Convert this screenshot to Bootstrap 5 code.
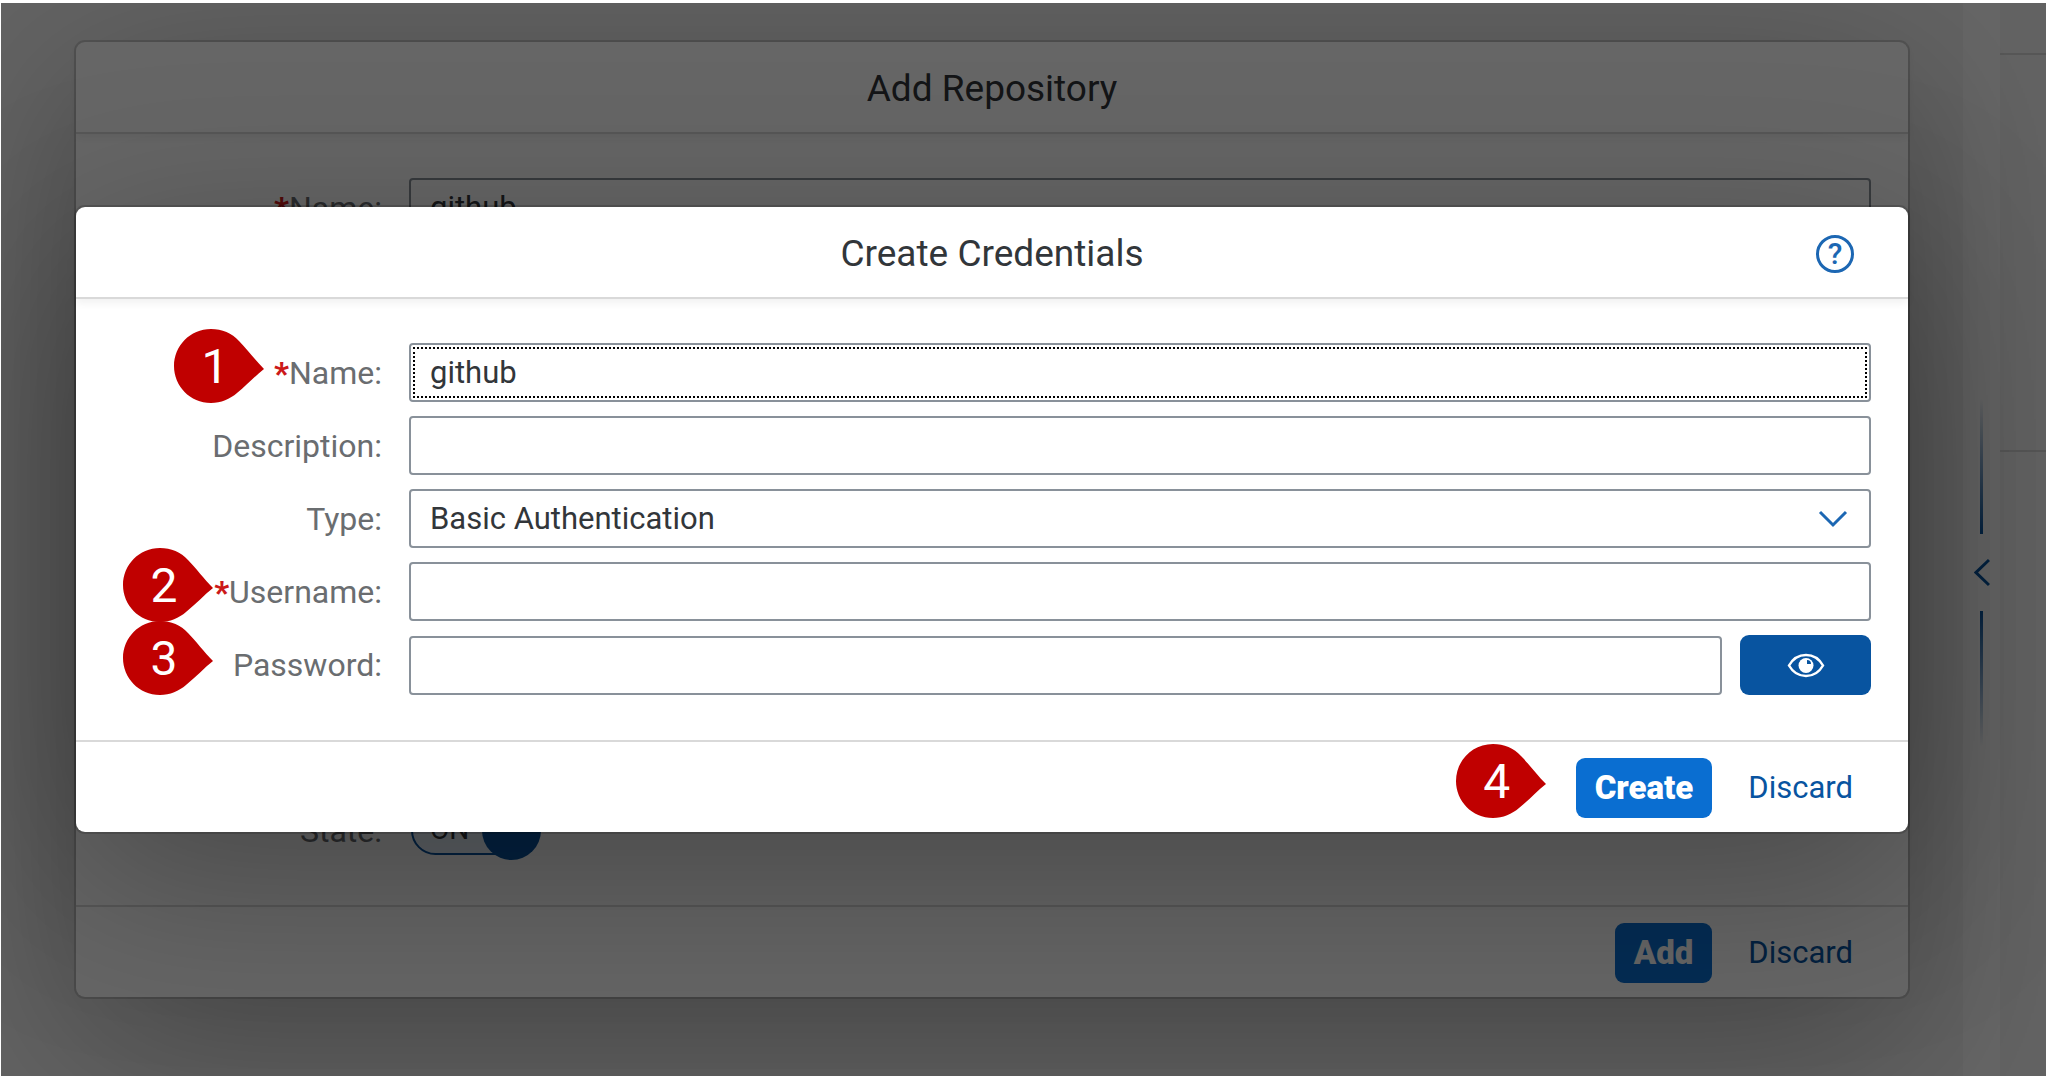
<!DOCTYPE html>
<html lang="en">
<head>
<meta charset="utf-8">
<meta name="viewport" content="width=device-width, initial-scale=1">
<title>Create Credentials</title>
<link href="https://cdn.jsdelivr.net/npm/bootstrap@5.3.0/dist/css/bootstrap.min.css" rel="stylesheet">
<style>
  :root { --ink: #32363a; --muted: #6a6d70; --brand: #0a6ed1; --brand-dark: #0854a0; --field: #89919a; --rule: #d9d9d9; }
  body { font-family: Roboto, "Liberation Sans", sans-serif; font-size: 31px; line-height: 40px; color: var(--ink); background: #fff; padding: 3px 2px 1px 1px; }
  .stage { overflow: hidden; background: #fff; }
  .pane-main, .pane-side { background: #f7f7f7; }
  .splitter { width: 37px; padding-top: 66px; }
  .splitter i { width: 3px; height: 135px; background: linear-gradient(transparent, var(--brand-dark)); }
  .splitter i:last-child { background: linear-gradient(var(--brand-dark), transparent); }
  .pane-side { width: 46px; }
  .pane-side div { border-bottom: 2px solid var(--rule); }
  .side-head { height: 52px; }
  .side-body { height: 397px; }
  .layer { position: absolute; inset: 0; padding: 39px 138px 79px 75px; }
  .dim { background: rgba(0, 0, 0, .6); }
  .dlg { width: 100%; background: #fff; border-radius: 9px; box-shadow: 0 0 0 2px rgba(0, 0, 0, .15), 0 46px 183px rgba(0, 0, 0, .3); }
  .dlg-head { height: 92px; border-bottom: 2px solid var(--rule); box-shadow: 0 4px 8px rgba(0, 0, 0, .06); padding: 4px 55px 0; }
  .dlg-head h1 { font-size: 37px; line-height: 44px; font-weight: 400; }
  .dlg-body { padding: 44px 37px 45px 0; gap: 14px; }
  .dlg-foot { height: 92px; border-top: 2px solid var(--rule); padding: 2px 37px 0; gap: 18px; }
  .lbl { width: 333px; padding-right: 27px; color: var(--muted); font-size: 32px; text-align: right; }
  .req::before { content: "*"; color: #cc1919; font-weight: 900; }
  .form-control.fld, .form-select.fld { height: 59px; border: 2px solid var(--field); border-radius: 4px; padding: 0 19px; font-size: 31px; line-height: 40px; color: var(--ink); background-color: #fff; }
  .form-select.fld { background: #fff url("data:image/svg+xml,%3Csvg xmlns='http://www.w3.org/2000/svg' viewBox='0 0 30 18'%3E%3Cpath d='M2 2l13 13L28 2' fill='none' stroke='%231c67b3' stroke-width='3'/%3E%3C/svg%3E") no-repeat right 21px center / 30px 18px; }
  .fld.is-focused { outline: 2px dotted #000; outline-offset: -6px; }
  .btn { height: 60px; font-size: 31px; line-height: 40px; border-radius: 9px; padding: 0 18px; border: 0; }
  .btn-main { background: var(--brand); color: #fff; font-size: 33px; font-weight: 900; padding: 0 19px; }
  .btn-quiet { color: var(--brand-dark); }
  .btn-eye { width: 131px; margin-left: 18px; padding: 0; background: var(--brand-dark); }
  .help { position: absolute; right: 54px; width: 38px; height: 38px; padding: 0; border: 3px solid #1c67b3; border-radius: 50%; background: none; color: #1c67b3; font-size: 30px; line-height: 32px; font-weight: 500; }
  .switcher { position: relative; width: 132px; height: 59px; }
  .switcher input { appearance: none; position: absolute; inset: 5px 6px 5px 2px; border: 2px solid var(--brand-dark); border-radius: 25px; background: #e8f2fc; margin: 0; }
  .switcher span { position: absolute; left: 21px; top: 9px; font-size: 28px; }
  .switcher::after { content: ""; position: absolute; right: 0; top: 0; width: 59px; height: 59px; border-radius: 50%; background: var(--brand-dark); }
  .pin { position: absolute; width: 90px; height: 74px; color: #fff; font-size: 48px; line-height: 76px; text-align: center; z-index: 2; }
  .pin svg { position: absolute; inset: 0; z-index: -1; }
  .pin span { display: block; width: 82px; }
  .anchor { position: relative; }
  .pin-a { left: 98px; top: -14px; }
  .pin-b, .pin-c { left: 47px; top: -14px; }
  .pin-d { right: calc(100% + 30px); top: -14px; }
</style>
<script src="https://cdn.jsdelivr.net/npm/bootstrap@5.3.0/dist/js/bootstrap.bundle.min.js"></script>
</head>
<body class="vh-100">
<svg class="d-none"><symbol id="drop" viewBox="0 0 90 74"><path d="M37 0C16 0 0 17 0 37s16 37 37 37c10 0 19-4 26-10C73 56 81 47 90 40C81 31 73 20 65 12C58 4 48 0 37 0z" fill="#c00000"/></symbol></svg>
<div class="stage position-relative h-100 d-flex">
  <main class="pane-main flex-grow-1"></main>
  <div class="splitter d-flex flex-column align-items-center justify-content-center gap-4">
    <i></i>
    <svg width="16" height="29" viewBox="0 0 16 29"><path d="M15 2L2 14.500L15 27" fill="none" stroke="#0854a0" stroke-width="3"/></svg>
    <i></i>
  </div>
  <aside class="pane-side"><div class="side-head"></div><div class="side-body"></div></aside>

  <div class="layer d-flex">
    <section class="dlg d-flex flex-column" aria-label="Add Repository">
      <header class="dlg-head d-flex align-items-center justify-content-center"><h1 class="m-0">Add Repository</h1></header>
      <div class="dlg-body d-flex flex-column justify-content-between flex-grow-1">
        <div class="d-flex align-items-center">
          <label class="lbl req" for="repoName">Name:</label>
          <input class="form-control fld flex-fill w-auto" id="repoName" value="github">
        </div>
        <div class="d-flex align-items-center">
          <label class="lbl" for="repoState">State:</label>
          <div class="switcher"><input type="checkbox" role="switch" id="repoState" checked><span>ON</span></div>
        </div>
      </div>
      <footer class="dlg-foot d-flex align-items-center justify-content-end">
        <button type="button" class="btn btn-main">Add</button>
        <button type="button" class="btn btn-quiet">Discard</button>
      </footer>
    </section>
  </div>

  <div class="layer dim d-flex align-items-center">
    <form class="dlg" aria-label="Create Credentials">
      <header class="dlg-head d-flex align-items-center justify-content-center position-relative">
        <h1 class="m-0">Create Credentials</h1>
        <button type="button" class="help" aria-label="Help">?</button>
      </header>
      <div class="dlg-body d-flex flex-column">
        <div class="anchor d-flex align-items-center">
          <div class="pin pin-a"><svg width="90" height="74"><use href="#drop"/></svg><span>1</span></div>
          <label class="lbl req" for="credName">Name:</label>
          <input class="form-control fld is-focused flex-fill w-auto" id="credName" value="github">
        </div>
        <div class="d-flex align-items-center">
          <label class="lbl" for="credDesc">Description:</label>
          <input class="form-control fld flex-fill w-auto" id="credDesc">
        </div>
        <div class="d-flex align-items-center">
          <label class="lbl" for="credType">Type:</label>
          <select class="form-select fld flex-fill w-auto" id="credType"><option>Basic Authentication</option></select>
        </div>
        <div class="anchor d-flex align-items-center">
          <div class="pin pin-b"><svg width="90" height="74"><use href="#drop"/></svg><span>2</span></div>
          <label class="lbl req" for="credUser">Username:</label>
          <input class="form-control fld flex-fill w-auto" id="credUser">
        </div>
        <div class="anchor d-flex align-items-center">
          <div class="pin pin-c"><svg width="90" height="74"><use href="#drop"/></svg><span>3</span></div>
          <label class="lbl" for="credPass">Password:</label>
          <input type="password" class="form-control fld flex-fill w-auto" id="credPass">
          <button type="button" class="btn btn-eye d-flex align-items-center justify-content-center" aria-label="Show password">
            <svg width="38" height="25" viewBox="0 0 38 25"><path d="M2 12.500C10-1.500 28-1.500 36 12.500C28 26.500 10 26.500 2 12.500z" fill="none" stroke="#fff" stroke-width="2.500"/><circle cx="19" cy="12.500" r="7.500" fill="#fff"/><path d="M20 11V7a4 4 0 0 1 4 4z" fill="#0854a0"/></svg>
          </button>
        </div>
      </div>
      <footer class="dlg-foot d-flex align-items-center justify-content-end">
        <div class="anchor">
          <div class="pin pin-d"><svg width="90" height="74"><use href="#drop"/></svg><span>4</span></div>
          <button type="button" class="btn btn-main d-block">Create</button>
        </div>
        <button type="button" class="btn btn-quiet">Discard</button>
      </footer>
    </form>
  </div>
</div>
</body>
</html>
